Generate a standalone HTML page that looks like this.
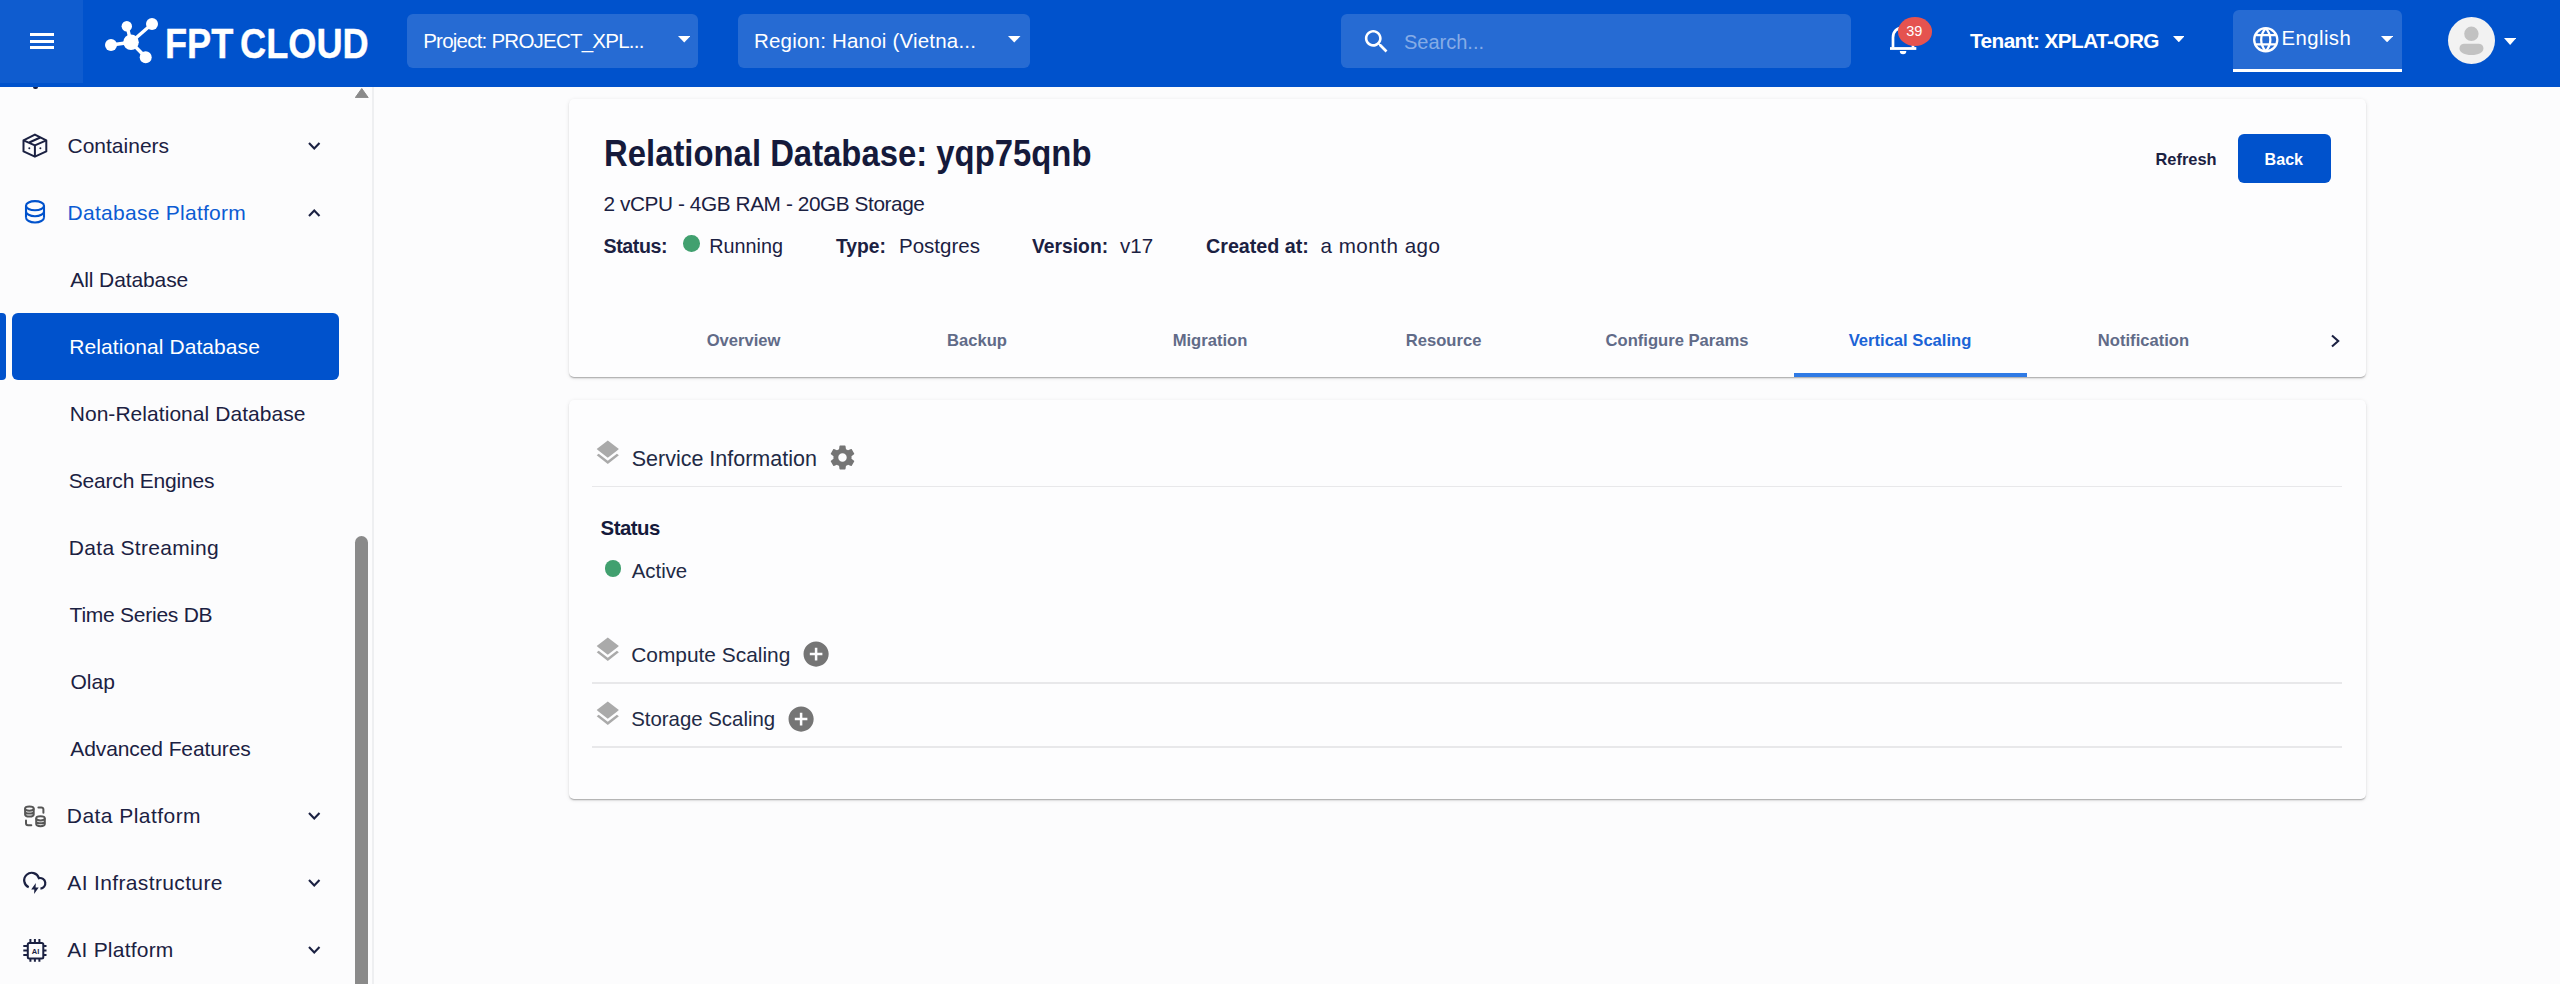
<!DOCTYPE html>
<html><head><meta charset="utf-8"><title>FPT Cloud - Relational Database</title>
<style>
html,body{margin:0;padding:0;}
body{width:2560px;height:984px;overflow:hidden;position:relative;background:#fcfcfd;font-family:"Liberation Sans",sans-serif;}
.t{position:absolute;white-space:nowrap;line-height:1;}
svg{display:block;}
</style></head><body>
<div style="position:absolute;left:0px;top:0px;width:2560px;height:87px;background:#0052cc;"></div>
<div style="position:absolute;left:0px;top:0px;width:83px;height:83px;background:rgba(255,255,255,0.06);"></div>
<div style="position:absolute;left:30px;top:33px;width:23.5px;height:2.7px;background:#fff;"></div>
<div style="position:absolute;left:30px;top:40px;width:23.5px;height:2.7px;background:#fff;"></div>
<div style="position:absolute;left:30px;top:46px;width:23.5px;height:2.7px;background:#fff;"></div>
<svg style="position:absolute;left:100px;top:15px;" width="65" height="55" viewBox="0 0 65 55"><g fill="#fff" stroke="#fff" stroke-width="3.4"><line x1="11" y1="30" x2="31" y2="27.3"/><line x1="27" y1="11.2" x2="31" y2="27.3"/><line x1="52" y1="9" x2="31" y2="27.3"/><line x1="45.7" y1="42.3" x2="31" y2="27.3"/></g><g fill="#fff"><circle cx="11" cy="30" r="6"/><circle cx="26.8" cy="11.2" r="5.2"/><circle cx="52" cy="9" r="6"/><circle cx="31" cy="27.3" r="7.8"/><circle cx="45.7" cy="42.3" r="6"/></g></svg>
<div class="t " style="left:164.8px;top:23.33px;font-size:42px;color:#fff;font-weight:700;letter-spacing:0px;transform:scaleX(0.862);transform-origin:0 0;word-spacing:-4px;-webkit-text-stroke:0.35px #fff;">FPT CLOUD</div>
<div style="position:absolute;left:407px;top:13.5px;width:291px;height:54.5px;background:rgba(255,255,255,0.15);border-radius:6px;"></div>
<div class="t " style="left:423.2px;top:30.74px;font-size:20.5px;color:#fff;letter-spacing:-0.77px;">Project: PROJECT_XPL...</div>
<svg style="position:absolute;left:677.5px;top:36px;" width="12.5" height="6.5" viewBox="0 0 12.5 6.5"><path d="M0 0H12.5L6.25 6.5Z" fill="#fff"/></svg>
<div style="position:absolute;left:738px;top:13.5px;width:291.5px;height:54.5px;background:rgba(255,255,255,0.15);border-radius:6px;"></div>
<div class="t " style="left:754px;top:30.74px;font-size:20.5px;color:#fff;letter-spacing:0.2px;">Region: Hanoi (Vietna...</div>
<svg style="position:absolute;left:1008px;top:36px;" width="12.5" height="6.5" viewBox="0 0 12.5 6.5"><path d="M0 0H12.5L6.25 6.5Z" fill="#fff"/></svg>
<div style="position:absolute;left:1341px;top:13.5px;width:510px;height:54.5px;background:rgba(255,255,255,0.15);border-radius:6px;"></div>
<svg style="position:absolute;left:1360.7px;top:25.6px;" width="31" height="31" viewBox="0 0 24 24"><path fill="#fff" d="M15.5 14h-.79l-.28-.27C15.41 12.59 16 11.11 16 9.5 16 5.91 13.09 3 9.5 3S3 5.91 3 9.5 5.91 16 9.5 16c1.61 0 3.09-.59 4.23-1.57l.27.28v.79l5 4.99L20.49 19l-4.99-5zm-6 0C7.01 14 5 11.99 5 9.5S7.01 5 9.5 5 14 7.01 14 9.5 11.99 14 9.5 14z"/></svg>
<div class="t " style="left:1404px;top:32.06px;font-size:20px;color:rgba(255,255,255,0.45);">Search...</div>
<svg style="position:absolute;left:1886px;top:22px;" width="36" height="36" viewBox="0 0 36 36"><path d="M7 25.5V15.5C7 9.5 11 5.6 17 5.6S27 9.5 27 15.5V25.5" fill="none" stroke="#fff" stroke-width="2.7"/><rect x="4" y="25.1" width="26.3" height="2.8" fill="#fff"/><path d="M13.8 29H20.3A3.25 3.25 0 0 1 13.8 29Z" fill="#fff"/></svg>
<div style="position:absolute;left:1897.8px;top:17px;width:34.6px;height:29.2px;background:#e5534f;border-radius:50%;"></div>
<div class="t " style="left:1906.3px;top:24.32px;font-size:14.5px;color:#fff;">39</div>
<div class="t " style="left:1970px;top:31.39px;font-size:20.8px;color:#fff;font-weight:700;letter-spacing:-0.6px;">Tenant: XPLAT-ORG</div>
<svg style="position:absolute;left:2172.9px;top:36px;" width="11.6" height="6.3" viewBox="0 0 11.6 6.3"><path d="M0 0H11.6L5.8 6.3Z" fill="#fff"/></svg>
<div style="position:absolute;left:2233px;top:10px;width:168.6px;height:59px;background:rgba(255,255,255,0.15);border-radius:6px 6px 0 0;"></div>
<div style="position:absolute;left:2233px;top:69px;width:168.6px;height:3px;background:#fff;"></div>
<svg style="position:absolute;left:2252px;top:26.2px;" width="27.5" height="27.5" viewBox="0 0 24 24"><g fill="none" stroke="#fff" stroke-width="2"><circle cx="12" cy="12" r="10.1"/><path d="M12 2C9.2 5 8 8.5 8 12S9.2 19 12 22M12 2C14.8 5 16 8.5 16 12S14.8 19 12 22M2.9 8H21.1M2.9 16H21.1"/></g></svg>
<div class="t " style="left:2281.5px;top:28.41px;font-size:20.3px;color:#fff;letter-spacing:0.45px;">English</div>
<svg style="position:absolute;left:2381px;top:36px;" width="12.2" height="6.3" viewBox="0 0 12.2 6.3"><path d="M0 0H12.2L6.1 6.3Z" fill="#fff"/></svg>
<div style="position:absolute;left:2447.5px;top:17px;width:47px;height:47px;background:#f2f2f2;border-radius:50%;overflow:hidden;"></div>
<svg style="position:absolute;left:2447.5px;top:17px;" width="47" height="47" viewBox="0 0 47 47"><circle cx="23.4" cy="16.8" r="7.2" fill="#c2c2c2"/><path d="M11.5 31.5C11.5 28.2 14 26.8 17 26.8H29.9C32.9 26.8 35.4 28.2 35.4 31.5C35.4 35.6 30.5 38 23.45 38C16.4 38 11.5 35.6 11.5 31.5Z" fill="#c2c2c2"/></svg>
<svg style="position:absolute;left:2503.5px;top:38px;" width="12.2" height="7" viewBox="0 0 12.2 7"><path d="M0 0H12.2L6.1 7Z" fill="#fff"/></svg>
<div style="position:absolute;left:371.7px;top:87px;width:2px;height:897px;background:#eeeff1;"></div>
<svg style="position:absolute;left:355px;top:88px;" width="13.5" height="10" viewBox="0 0 13.5 10"><path d="M6.75 0.5L13.2 9.6H0.3Z" fill="#8a8a8a" stroke="#8a8a8a" stroke-width="1" stroke-linejoin="round"/></svg>
<div style="position:absolute;left:355px;top:535.6px;width:13.2px;height:460px;background:#8a8a8a;border-radius:6.6px;"></div>
<div style="position:absolute;left:32.5px;top:87px;width:5px;height:2px;background:#1b2142;border-radius:0 0 3px 3px;"></div>
<svg style="position:absolute;left:20px;top:130px;" width="30" height="30" viewBox="0 0 30 30"><g fill="none" stroke="#1b2142" stroke-width="2" stroke-linejoin="round"><path d="M14.9 4.6L26.3 10.4V21.4L14.9 26.7L3.5 21.4V10.4Z"/><path d="M3.5 10.4L14.9 15.3L26.3 10.4M14.9 15.3V26.7M9.2 12.5L20.3 7.5"/></g><g fill="#1b2142"><circle cx="9.3" cy="18.3" r="1"/><circle cx="20.4" cy="18.3" r="1"/></g></svg>
<div class="t " style="left:67.5px;top:134.72px;font-size:21px;color:#1b2142;">Containers</div>
<svg style="position:absolute;left:308px;top:141.5px;" width="12.5" height="8" viewBox="0 0 12.5 8"><path d="M1 1L6.25 6.5L11.5 1" fill="none" stroke="#1b2142" stroke-width="2.1"/></svg>
<svg style="position:absolute;left:20px;top:195px;" width="30" height="32" viewBox="0 0 30 32"><g fill="none" stroke="#0052cc" stroke-width="2.1"><ellipse cx="15" cy="10.7" rx="9" ry="4.6"/><path d="M6 10.7V22.7M24 10.7V22.7"/><path d="M6 16.4A9 4.8 0 0 0 24 16.4"/><path d="M6 22.5A9 5 0 0 0 24 22.5"/></g></svg>
<div class="t " style="left:67.6px;top:201.77px;font-size:21px;color:#0b5bd3;letter-spacing:0.27px;">Database Platform</div>
<svg style="position:absolute;left:308px;top:208.5px;" width="12.5" height="8" viewBox="0 0 12.5 8"><path d="M1 7L6.25 1.5L11.5 7" fill="none" stroke="#1b2142" stroke-width="2.1"/></svg>
<div style="position:absolute;left:11.6px;top:313px;width:327.4px;height:66.6px;background:#0052cc;border-radius:6px;"></div>
<div style="position:absolute;left:0px;top:313px;width:5.5px;height:66.6px;background:#0052cc;border-radius:0 4px 4px 0;"></div>
<div class="t " style="left:70.3px;top:268.82px;font-size:21px;color:#1b2142;letter-spacing:-0.1px;">All Database</div>
<div class="t " style="left:69.3px;top:335.87px;font-size:21px;color:#fff;letter-spacing:0.08px;">Relational Database</div>
<div class="t " style="left:69.7px;top:402.92px;font-size:21px;color:#1b2142;letter-spacing:0.05px;">Non-Relational Database</div>
<div class="t " style="left:68.8px;top:469.97px;font-size:21px;color:#1b2142;letter-spacing:-0.2px;">Search Engines</div>
<div class="t " style="left:68.8px;top:537.02px;font-size:21px;color:#1b2142;letter-spacing:0.3px;">Data Streaming</div>
<div class="t " style="left:69.6px;top:604.07px;font-size:21px;color:#1b2142;letter-spacing:-0.25px;">Time Series DB</div>
<div class="t " style="left:70.5px;top:671.12px;font-size:21px;color:#1b2142;letter-spacing:0px;">Olap</div>
<div class="t " style="left:70.3px;top:738.17px;font-size:21px;color:#1b2142;letter-spacing:-0.1px;">Advanced Features</div>
<svg style="position:absolute;left:20px;top:801px;" width="30" height="30" viewBox="0 0 30 30"><g fill="none" stroke="#555555" stroke-width="2"><ellipse cx="9.4" cy="7.6" rx="4.3" ry="2.1"/><path d="M5.1 7.6V13.4A4.3 2.1 0 0 0 13.7 13.4V7.6M5.1 10.5A4.3 2.1 0 0 0 13.7 10.5"/><ellipse cx="20.5" cy="17.3" rx="4.3" ry="2.1"/><path d="M16.2 17.3V23.1A4.3 2.1 0 0 0 24.8 23.1V17.3M16.2 20.2A4.3 2.1 0 0 0 24.8 20.2"/><path d="M18.4 6.4H21.4A2 2 0 0 1 23.4 8.4V11.7M6 19.4V22.3A2 2 0 0 0 8 24.3H11.3" stroke-linecap="round"/></g></svg>
<div class="t " style="left:66.8px;top:805.22px;font-size:21px;color:#1b2142;letter-spacing:0.45px;">Data Platform</div>
<svg style="position:absolute;left:308px;top:811.5px;" width="12.5" height="8" viewBox="0 0 12.5 8"><path d="M1 1L6.25 6.5L11.5 1" fill="none" stroke="#1b2142" stroke-width="2.1"/></svg>
<svg style="position:absolute;left:20px;top:868px;" width="30" height="30" viewBox="0 0 30 30"><g fill="none" stroke="#1b2142" stroke-width="2.2"><path d="M8.73 19.19A7.5 7.5 0 1 1 18.88 10.12A5.3 5.3 0 1 1 20.45 20.58"/></g><path d="M15.8 14.9L11.2 21.5H14.3L14.1 25.9L18.7 19.5H15.6Z" fill="#1b2142"/></svg>
<div class="t " style="left:67.3px;top:872.27px;font-size:21px;color:#1b2142;letter-spacing:0.36px;">AI Infrastructure</div>
<svg style="position:absolute;left:308px;top:878.5px;" width="12.5" height="8" viewBox="0 0 12.5 8"><path d="M1 1L6.25 6.5L11.5 1" fill="none" stroke="#1b2142" stroke-width="2.1"/></svg>
<svg style="position:absolute;left:20px;top:935px;" width="30" height="30" viewBox="0 0 30 30"><g fill="none" stroke="#1b2142" stroke-width="2"><rect x="7.8" y="8" width="15.5" height="15.5" rx="1.5"/><path d="M10.4 4.1V8M14.9 4.1V8M19.4 4.1V8M10.4 23.5V26.7M14.9 23.5V26.7M19.4 23.5V26.7M3.3 11H7.8M3.3 15.5H7.8M3.3 20H7.8M23.3 11H26.5M23.3 15.5H26.5M23.3 20H26.5"/></g><text x="15.5" y="18.6" font-family="Liberation Sans" font-weight="700" font-size="7.5" text-anchor="middle" fill="#1b2142">AI</text></svg>
<div class="t " style="left:67.3px;top:939.32px;font-size:21px;color:#1b2142;letter-spacing:0.22px;">AI Platform</div>
<svg style="position:absolute;left:308px;top:945.5px;" width="12.5" height="8" viewBox="0 0 12.5 8"><path d="M1 1L6.25 6.5L11.5 1" fill="none" stroke="#1b2142" stroke-width="2.1"/></svg>
<div style="position:absolute;left:568.5px;top:99px;width:1797.5px;height:277.5px;background:#fdfdfe;border-radius:5px;box-shadow:0 2px 2px -1px rgba(0,0,0,0.2),0 1px 1px 0 rgba(0,0,0,0.12),0 1px 4px 0 rgba(0,0,0,0.10);"></div>
<div class="t " style="left:603.5px;top:135.47px;font-size:37px;color:#151a3b;font-weight:700;transform:scaleX(0.888);transform-origin:0 0;">Relational Database: yqp75qnb</div>
<div class="t " style="left:603.5px;top:194.29px;font-size:20.8px;color:#1b2142;letter-spacing:-0.42px;">2 vCPU - 4GB RAM - 20GB Storage</div>
<div class="t " style="left:603.5px;top:237.10px;font-size:19.6px;color:#1b2142;font-weight:700;letter-spacing:-0.4px;">Status:</div>
<div style="position:absolute;left:683.3px;top:235.1px;width:16.6px;height:16.6px;background:#41a06f;border-radius:50%;"></div>
<div class="t " style="left:709.3px;top:236.93px;font-size:19.8px;color:#1b2142;">Running</div>
<div class="t " style="left:836px;top:237.36px;font-size:19.3px;color:#1b2142;font-weight:700;">Type:</div>
<div class="t " style="left:899px;top:236.34px;font-size:20.5px;color:#1b2142;">Postgres</div>
<div class="t " style="left:1032px;top:237.36px;font-size:19.3px;color:#1b2142;font-weight:700;">Version:</div>
<div class="t " style="left:1120px;top:236.34px;font-size:20.5px;color:#1b2142;">v17</div>
<div class="t " style="left:1206px;top:237.02px;font-size:19.7px;color:#1b2142;font-weight:700;">Created at:</div>
<div class="t " style="left:1320.5px;top:236.26px;font-size:20.6px;color:#1b2142;letter-spacing:0.5px;">a month ago</div>
<div class="t " style="left:2155.5px;top:150.91px;font-size:16.4px;color:#1b2142;font-weight:700;">Refresh</div>
<div style="position:absolute;left:2237.5px;top:134.1px;width:93.2px;height:48.9px;background:#0052cc;border-radius:6px;"></div>
<div class="t " style="left:2264.6px;top:151.17px;font-size:16.1px;color:#fff;font-weight:700;">Back</div>
<div class="t" style="left:626.9px;width:233.4px;text-align:center;top:333.31px;font-size:16.6px;font-weight:700;color:#616b88;">Overview</div>
<div class="t" style="left:860.3px;width:233.4px;text-align:center;top:333.31px;font-size:16.6px;font-weight:700;color:#616b88;">Backup</div>
<div class="t" style="left:1093.3px;width:233.4px;text-align:center;top:333.31px;font-size:16.6px;font-weight:700;color:#616b88;">Migration</div>
<div class="t" style="left:1326.9px;width:233.4px;text-align:center;top:333.31px;font-size:16.6px;font-weight:700;color:#616b88;">Resource</div>
<div class="t" style="left:1560.3px;width:233.4px;text-align:center;top:333.31px;font-size:16.6px;font-weight:700;color:#616b88;">Configure Params</div>
<div class="t" style="left:1793.3px;width:233.4px;text-align:center;top:333.31px;font-size:16.6px;font-weight:700;color:#1a63d6;">Vertical Scaling</div>
<div class="t" style="left:2026.8px;width:233.4px;text-align:center;top:333.31px;font-size:16.6px;font-weight:700;color:#616b88;">Notification</div>
<div style="position:absolute;left:1794px;top:373.2px;width:233.4px;height:3.5px;background:#2f7ae5;"></div>
<svg style="position:absolute;left:2329px;top:334px;" width="13" height="14" viewBox="0 0 13 14"><path d="M3 1.5L9.2 7L3 12.5" fill="none" stroke="#1b2142" stroke-width="2.1"/></svg>
<div style="position:absolute;left:568.5px;top:399.5px;width:1797.5px;height:399.5px;background:#fdfdfe;border-radius:5px;box-shadow:0 2px 2px -1px rgba(0,0,0,0.2),0 1px 1px 0 rgba(0,0,0,0.12),0 1px 4px 0 rgba(0,0,0,0.10);"></div>
<svg style="position:absolute;left:593px;top:437.6px;" width="29.6" height="29.6" viewBox="0 0 24 24"><path fill="#aaaaaa" d="M11.99 18.54l-7.37-5.73L3 14.07l9 7 9-7-1.63-1.27-7.38 5.74zM12 16l7.36-5.73L21 9l-9-7-9 7 1.63 1.27L12 16z"/></svg>
<div class="t " style="left:631.7px;top:448.79px;font-size:21.5px;color:#222a45;">Service Information</div>
<svg style="position:absolute;left:828px;top:443px;" width="29" height="29" viewBox="0 0 24 24"><path fill="#757575" d="M19.43 12.98c.04-.32.07-.64.07-.98s-.03-.66-.07-.98l2.11-1.65c.19-.15.24-.42.12-.64l-2-3.46c-.12-.22-.39-.3-.61-.22l-2.49 1c-.52-.4-1.08-.73-1.69-.98l-.38-2.65C14.46 2.18 14.25 2 14 2h-4c-.25 0-.46.18-.49.42l-.38 2.65c-.61.25-1.17.59-1.69.98l-2.49-1c-.23-.09-.49 0-.61.22l-2 3.46c-.13.22-.07.49.12.64l2.11 1.65c-.04.32-.07.65-.07.98s.03.66.07.98l-2.11 1.65c-.19.15-.24.42-.12.64l2 3.46c.12.22.39.3.61.22l2.49-1c.52.4 1.08.73 1.69.98l.38 2.65c.03.24.24.42.49.42h4c.25 0 .46-.18.49-.42l.38-2.65c.61-.25 1.17-.59 1.69-.98l2.49 1c.23.09.49 0 .61-.22l2-3.46c.12-.22.07-.49-.12-.64l-2.11-1.65zM12 15.5c-1.93 0-3.5-1.57-3.5-3.5s1.57-3.5 3.5-3.5 3.5 1.57 3.5 3.5-1.57 3.5-3.5 3.5z"/></svg>
<div style="position:absolute;left:592px;top:485.5px;width:1750px;height:1.5px;background:#e8e8ea;"></div>
<div class="t " style="left:600.6px;top:518.43px;font-size:20.4px;color:#151a3b;font-weight:700;letter-spacing:-0.5px;">Status</div>
<div style="position:absolute;left:604.8px;top:560px;width:16.6px;height:16.6px;background:#41a06f;border-radius:50%;"></div>
<div class="t " style="left:631.7px;top:561.13px;font-size:20.4px;color:#222a45;">Active</div>
<svg style="position:absolute;left:593px;top:634.8px;" width="29.6" height="29.6" viewBox="0 0 24 24"><path fill="#aaaaaa" d="M11.99 18.54l-7.37-5.73L3 14.07l9 7 9-7-1.63-1.27-7.38 5.74zM12 16l7.36-5.73L21 9l-9-7-9 7 1.63 1.27L12 16z"/></svg>
<div class="t " style="left:631.2px;top:644.90px;font-size:20.9px;color:#222a45;">Compute Scaling</div>
<svg style="position:absolute;left:801px;top:639px;" width="30.2" height="30.2" viewBox="0 0 24 24"><path fill="#757575" d="M12 2C6.48 2 2 6.48 2 12s4.48 10 10 10 10-4.48 10-10S17.52 2 12 2zm5 11h-4v4h-2v-4H7v-2h4V7h2v4h4v2z"/></svg>
<div style="position:absolute;left:592px;top:682px;width:1750px;height:1.5px;background:#e8e8ea;"></div>
<svg style="position:absolute;left:593px;top:699.2px;" width="29.6" height="29.6" viewBox="0 0 24 24"><path fill="#aaaaaa" d="M11.99 18.54l-7.37-5.73L3 14.07l9 7 9-7-1.63-1.27-7.38 5.74zM12 16l7.36-5.73L21 9l-9-7-9 7 1.63 1.27L12 16z"/></svg>
<div class="t " style="left:631.2px;top:709.13px;font-size:20.4px;color:#222a45;">Storage Scaling</div>
<svg style="position:absolute;left:785.8px;top:703.5px;" width="30.2" height="30.2" viewBox="0 0 24 24"><path fill="#757575" d="M12 2C6.48 2 2 6.48 2 12s4.48 10 10 10 10-4.48 10-10S17.52 2 12 2zm5 11h-4v4h-2v-4H7v-2h4V7h2v4h4v2z"/></svg>
<div style="position:absolute;left:592px;top:746.3px;width:1750px;height:1.5px;background:#e8e8ea;"></div>

</body></html>
